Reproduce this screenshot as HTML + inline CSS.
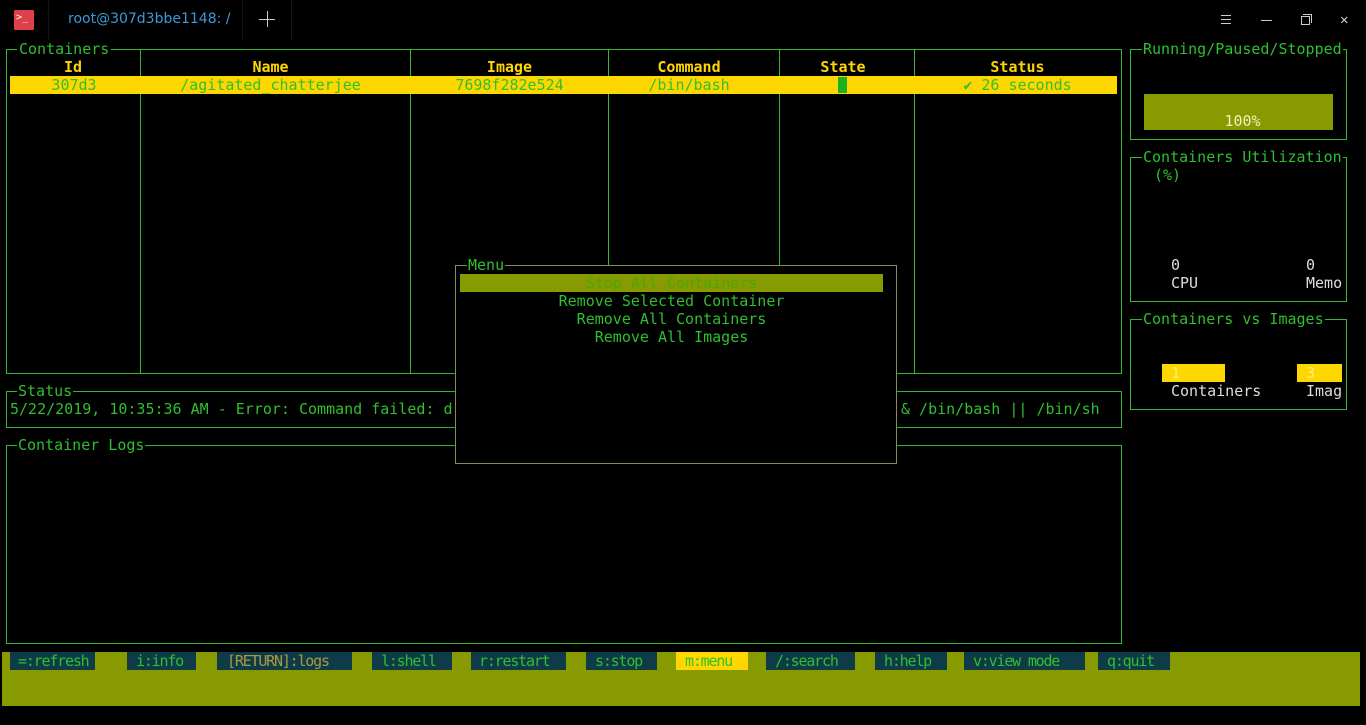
<!DOCTYPE html>
<html><head><meta charset="utf-8"><style>
*{margin:0;padding:0;box-sizing:border-box}
body{width:1366px;height:725px;background:#000;overflow:hidden;position:relative;font-family:"DejaVu Sans Mono","Liberation Mono",monospace;font-size:15px;color:#2fbf2f}
.t{position:absolute;white-space:pre;line-height:18px;height:18px}
.b{position:absolute;border:1px solid #35b535}
.lbl{position:absolute;background:#000;white-space:pre;line-height:18px;color:#2fbf2f}
.v{position:absolute;width:1px;background:#35b535}
.h{color:#ffd700;font-weight:bold;text-align:center}
.btn{position:absolute;top:652px;height:18px;line-height:18px;background:#0e3b47;white-space:pre;padding-left:8px;color:#2fbf2f;font-size:15px;letter-spacing:-1.2px;overflow:hidden}
</style></head><body>
<!-- titlebar -->
<div style="position:absolute;left:14px;top:10px;width:20px;height:20px;background:#e0404a;border-radius:1px"></div>
<div class="t" style="left:16px;top:9px;color:#fff;font-size:10px">&gt;_</div>
<div class="t" style="left:68px;top:10px;font-family:'DejaVu Sans','Liberation Sans',sans-serif;font-size:14px;color:#3a9ad9">root@307d3bbe1148: /</div>
<div style="position:absolute;left:48px;top:0;width:1px;height:40px;background:#151515"></div>
<div style="position:absolute;left:242px;top:0;width:1px;height:40px;background:#151515"></div>
<div style="position:absolute;left:291px;top:0;width:1px;height:40px;background:#151515"></div>
<div style="position:absolute;left:259px;top:19px;width:16px;height:1px;background:#ccc"></div>
<div style="position:absolute;left:267px;top:11px;width:1px;height:16px;background:#ccc"></div>
<div style="position:absolute;left:1221px;top:15px;width:10px;height:1px;background:#ccc;box-shadow:0 4px 0 #ccc,0 8px 0 #ccc"></div>
<div style="position:absolute;left:1261px;top:20px;width:11px;height:1px;background:#ccc"></div>
<div style="position:absolute;left:1301px;top:16px;width:9px;height:9px;border:1px solid #ccc"></div>
<div style="position:absolute;left:1303px;top:14px;width:9px;height:9px;border-top:1px solid #ccc;border-right:1px solid #ccc"></div>
<div class="t" style="left:1340px;top:11px;color:#ccc;font-size:14px">✕</div>

<!-- containers -->
<div class="b" style="left:6px;top:49px;width:1116px;height:325px"></div>
<div class="lbl" style="left:17px;top:40px;padding:0 2px">Containers</div>
<div class="v" style="left:140px;top:49px;height:325px"></div>
<div class="v" style="left:410px;top:49px;height:325px"></div>
<div class="v" style="left:608px;top:49px;height:325px"></div>
<div class="v" style="left:779px;top:49px;height:325px"></div>
<div class="v" style="left:914px;top:49px;height:325px"></div>
<div class="t h" style="left:8px;top:58px;width:130px">Id</div>
<div class="t h" style="left:136px;top:58px;width:269px">Name</div>
<div class="t h" style="left:411px;top:58px;width:197px">Image</div>
<div class="t h" style="left:604px;top:58px;width:170px">Command</div>
<div class="t h" style="left:776px;top:58px;width:134px">State</div>
<div class="t h" style="left:916px;top:58px;width:203px">Status</div>
<div style="position:absolute;left:10px;top:76px;width:1107px;height:18px;background:#ffd700"></div>
<div class="t" style="left:9px;top:76px;width:130px;text-align:center">307d3</div>
<div class="t" style="left:136px;top:76px;width:269px;text-align:center">/agitated_chatterjee</div>
<div class="t" style="left:411px;top:76px;width:197px;text-align:center">7698f282e524</div>
<div class="t" style="left:604px;top:76px;width:170px;text-align:center">/bin/bash</div>
<div style="position:absolute;left:838px;top:77px;width:9px;height:16px;background:#1db21d"></div>
<div class="t" style="left:916px;top:76px;width:203px;text-align:center">✔ 26 seconds</div>

<!-- status -->
<div class="b" style="left:6px;top:391px;width:1116px;height:37px"></div>
<div class="lbl" style="left:17px;top:382px;padding:0 1px">Status</div>
<div class="t" style="left:10px;top:400px">5/22/2019, 10:35:36 AM - Error: Command failed: d</div>
<div class="t" style="left:901px;top:400px">&amp; /bin/bash || /bin/sh</div>

<!-- logs -->
<div class="b" style="left:6px;top:445px;width:1116px;height:199px"></div>
<div class="lbl" style="left:17px;top:436px;padding:0 1px">Container Logs</div>

<!-- menu -->
<div class="b" style="left:455px;top:265px;width:442px;height:199px;background:#000;border-color:#8a8a5a"></div>
<div class="lbl" style="left:467px;top:256px;padding:0 1px">Menu</div>
<div style="position:absolute;left:460px;top:274px;width:423px;height:18px;background:#879a00"></div>
<div class="t" style="left:460px;top:274px;width:423px;text-align:center;color:#4aa800">Stop All Containers</div>
<div class="t" style="left:460px;top:292px;width:423px;text-align:center">Remove Selected Container</div>
<div class="t" style="left:460px;top:310px;width:423px;text-align:center">Remove All Containers</div>
<div class="t" style="left:460px;top:328px;width:423px;text-align:center">Remove All Images</div>

<!-- right panels -->
<div class="b" style="left:1130px;top:49px;width:217px;height:91px"></div>
<div class="lbl" style="left:1142px;top:40px;padding:0 1px">Running/Paused/Stopped</div>
<div style="position:absolute;left:1144px;top:94px;width:189px;height:36px;background:#879a00"></div>
<div class="t" style="left:1144px;top:112px;width:197px;text-align:center;color:#f0f0c0">100%</div>

<div class="b" style="left:1130px;top:157px;width:217px;height:145px"></div>
<div class="lbl" style="left:1142px;top:148px;padding:0 1px">Containers Utilization</div>
<div class="t" style="left:1154px;top:166px">(%)</div>
<div class="t" style="left:1171px;top:256px;color:#ddd">0</div>
<div class="t" style="left:1171px;top:274px;color:#ddd">CPU</div>
<div class="t" style="left:1306px;top:256px;color:#ddd">0</div>
<div class="t" style="left:1306px;top:274px;color:#ddd">Memo</div>

<div class="b" style="left:1130px;top:319px;width:217px;height:91px"></div>
<div class="lbl" style="left:1142px;top:310px;padding:0 1px">Containers vs Images</div>
<div style="position:absolute;left:1162px;top:364px;width:63px;height:18px;background:#ffd700"></div>
<div class="t" style="left:1171px;top:364px;color:#ffee80">1</div>
<div style="position:absolute;left:1297px;top:364px;width:45px;height:18px;background:#ffd700"></div>
<div class="t" style="left:1306px;top:364px;color:#ffee80">3</div>
<div class="t" style="left:1171px;top:382px;color:#ddd">Containers</div>
<div class="t" style="left:1306px;top:382px;color:#ddd">Imag</div>

<!-- footer -->
<div style="position:absolute;left:2px;top:652px;width:1358px;height:54px;background:#879a00"></div>
<div class="btn" style="left:10px;width:85px">=:refresh</div>
<div class="btn" style="left:127px;width:69px;padding-left:9px">i:info</div>
<div class="btn" style="left:217px;width:135px;padding-left:10px;color:#a89a40">[RETURN]:logs</div>
<div class="btn" style="left:372px;width:80px;padding-left:9px">l:shell</div>
<div class="btn" style="left:471px;width:95px">r:restart</div>
<div class="btn" style="left:586px;width:71px;padding-left:9px">s:stop</div>
<div class="btn" style="left:676px;width:72px;background:#ffd700;padding-left:9px;color:#2fbf2f">m:menu</div>
<div class="btn" style="left:766px;width:89px;padding-left:9px">/:search</div>
<div class="btn" style="left:875px;width:72px;padding-left:9px">h:help</div>
<div class="btn" style="left:964px;width:121px;padding-left:9px">v:view mode</div>
<div class="btn" style="left:1098px;width:72px;padding-left:9px">q:quit</div>
</body></html>
